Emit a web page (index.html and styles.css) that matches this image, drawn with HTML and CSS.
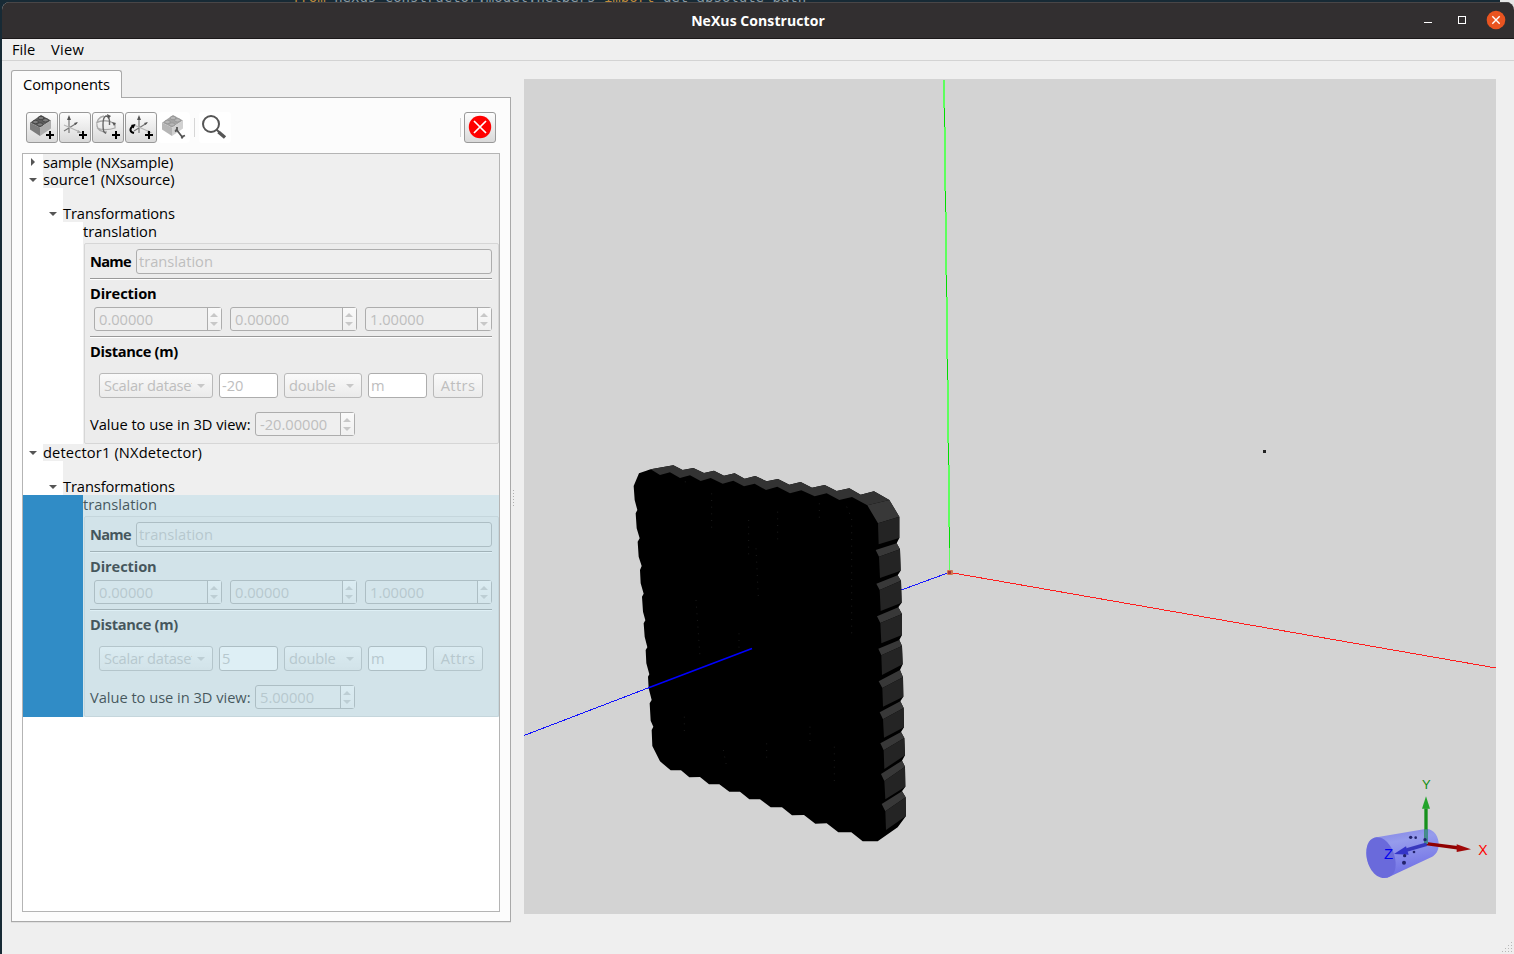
FILE: index.html
```html
<!DOCTYPE html>
<html lang="en">
<head>
<meta charset="utf-8">
<title>NeXus Constructor</title>
<link rel="stylesheet" href="styles.css">
</head>
<body>
<div class="desktop">
<div class="code"><span class="kw">from</span> nexus_constructor.model.helpers <span class="kw">import</span> get_absolute_path</div>
<div class="window">
<header class="titlebar"><span class="title">NeXus Constructor</span>
<svg class="winbtns" width="90" height="36" viewBox="1424 2 90 36"><path d="M1424 21.500h8" stroke="#fff"/><rect x="1458.5" y="15.5" width="7" height="7" fill="none" stroke="#fff"/><circle cx="1496" cy="19" r="9.3" fill="#e95420"/><path d="M1492.3 15.3l7.4 7.4M1499.7 15.3l-7.4 7.4" stroke="#fff" stroke-width="1.4"/></svg>
</header>
<nav class="menubar"><span class="m-file">File</span><span class="m-view">View</span></nav>
<main class="main">
<section class="left">
<div class="tab"><span>Components</span></div>
<div class="panel">
<div class="toolbar">
<svg width="0" height="0" class="defs"><defs>
<g id="brick"><path d="M3 9.700L14 2l10 5.500-11 7z" fill="#5c5c5c"/><path d="M3 9.700l10 4.800v8.500L3 16.500z" fill="#7c7c7c"/><path d="M13 14.500l11-7v8L13 23z" fill="#adadad"/><g fill="#7d7d7d" stroke="#3c3c3c" stroke-width=".8"><ellipse cx="8.500" cy="9" rx="2.900" ry="1.700"/><ellipse cx="13" cy="11.500" rx="2.900" ry="1.700"/><ellipse cx="14" cy="5" rx="2.900" ry="1.700"/><ellipse cx="18.500" cy="7.300" rx="2.900" ry="1.700"/></g></g>
<g id="plus"><path d="M19 22h8M23 18v8" stroke="#000" stroke-width="2" fill="none"/></g>
<g id="axes" fill="none"><path d="M9 20V5M4 18l13-8" stroke="#777" stroke-width="1.2"/><path d="M9 2l-2 5h4zM18 9l-4 1 1.500 2z" fill="#555"/><path d="M4 12l16 7" stroke="#b5b5b5" stroke-width="1.200"/><path d="M22 20l-4-3-1 3z" fill="#aaa"/></g>
</defs></svg>
<span class="tb"><svg width="30" height="29"><use href="#brick"/><use href="#plus"/></svg></span>
<span class="tb"><svg width="30" height="29"><use href="#axes"/><use href="#plus"/></svg></span>
<span class="tb"><svg width="30" height="29" fill="none"><path d="M11 3c-5 1-8 5-7 10s5 6 10 6M3 10c5-3 13-3 17 0M4 15c5 2 12 2 18 0v-4" stroke="#aaa" stroke-width="1.300"/><path d="M13 20c-4 0-4-16 0-17 3 0 4 4 3.500 9M10 18l3 2.500" stroke="#666" stroke-width="1.400"/><path d="M14 1l4 2-3 3zM19 9l4 1-2 3z" fill="#555"/><use href="#plus"/></svg></span>
<span class="tb"><svg width="30" height="29"><g transform="translate(4 0)"><use href="#axes"/></g><path d="M8 20c-4-1-5-4-1-7" fill="none" stroke="#000" stroke-width="2"/><path d="M5 12l4.500-1-2 4.500z"/><use href="#plus"/></svg></span>
<span class="tb plain"><svg width="30" height="29"><g opacity=".55"><use href="#brick"/></g><path d="M17 16l7 9M16 18.500l2-1.500 0-3M22.500 25.500l1-2 2.500-1" fill="none" stroke="#555" stroke-width="1.800"/></svg></span>
<i class="sep"></i>
<span class="tb search"><svg width="32" height="31"><circle cx="12" cy="12" r="8" fill="none" stroke="#555" stroke-width="2"/><path d="M17.500 17.500l3 3" stroke="#555" stroke-width="2"/><path d="M19.500 20l6.500 5.500" stroke="#555" stroke-width="3.500"/></svg></span>
<i class="sep far"></i>
<span class="tb"><svg width="30" height="29"><circle cx="15" cy="14" r="11.200" fill="#f00"/><path d="M9 8l12 12M21 8L9 20" stroke="#fff" stroke-width="1.700"/></svg></span>
</div>
<div class="tree">
<div class="row l1"><i class="arrow shut"></i><span>sample (NXsample)</span></div>
<div class="row l1"><i class="arrow"></i><span>source1 (NXsource)</span></div>
<div class="row l2"></div>
<div class="row l2"><i class="arrow"></i><span class="t-trans">Transformations</span></div>
<div class="item"><div class="item-body">
<div class="item-title">translation</div>
<div class="frame">
<div class="name-row"><b class="t-name">Name</b><div class="field name"><span>translation</span></div></div>
<hr>
<b class="heading t-dir">Direction</b>
<div class="vec"><div class="spin"><span>0.00000</span><i></i></div><div class="spin"><span>0.00000</span><i></i></div><div class="spin"><span>1.00000</span><i></i></div></div>
<hr class="second">
<b class="heading t-dist">Distance (m)</b>
<div class="fields"><div class="combo wide"><span>Scalar dataset</span><i></i></div><div class="field white">-20</div><div class="combo"><span>double</span><i></i></div><div class="field white">m</div><div class="attrs">Attrs</div></div>
<div class="value"><span class="t-val">Value to use in 3D view:</span><div class="spin"><span>-20.00000</span><i></i></div></div>
</div></div></div>
<div class="row l1"><i class="arrow"></i><span class="t-det">detector1 (NXdetector)</span></div>
<div class="row l2"></div>
<div class="row l2"><i class="arrow"></i><span class="t-trans">Transformations</span></div>
<div class="item selected"><div class="item-body">
<div class="item-title">translation</div>
<div class="frame">
<div class="name-row"><b class="t-name">Name</b><div class="field name"><span>translation</span></div></div>
<hr>
<b class="heading t-dir">Direction</b>
<div class="vec"><div class="spin"><span>0.00000</span><i></i></div><div class="spin"><span>0.00000</span><i></i></div><div class="spin"><span>1.00000</span><i></i></div></div>
<hr class="second">
<b class="heading t-dist">Distance (m)</b>
<div class="fields"><div class="combo wide"><span>Scalar dataset</span><i></i></div><div class="field white">5</div><div class="combo"><span>double</span><i></i></div><div class="field white">m</div><div class="attrs">Attrs</div></div>
<div class="value"><span class="t-val">Value to use in 3D view:</span><div class="spin"><span>5.00000</span><i></i></div></div>
</div></div></div>
</div>
</div>
</section>
<div class="splitter"><i></i></div>
<svg class="scene" width="972" height="835" viewBox="524 79 972 835">
<defs>
<linearGradient id="cyl" x1="0" y1="0" x2=".3" y2="1"><stop offset="0" stop-color="#7f7fe4"/><stop offset=".35" stop-color="#969cec"/><stop offset="1" stop-color="#7070e6"/></linearGradient>
</defs>
<g shape-rendering="crispEdges">
<path fill="#5dff5d" d="M943 80h1v28h-1zM944 80h1v111h-1zM945 127h1v148h-1zM946 212h1v147h-1zM947 297h1v146h-1zM948 380h1v147h-1zM949 465h1v107h-1z"/>
<path fill="#00dc00" d="M944 108h1v19h-1zM945 191h1v21h-1zM946 275h1v22h-1zM947 359h1v21h-1zM948 443h1v22h-1zM949 527h1v21h-1z"/>
<path d="M950 572.500L1496 668" stroke="#ff1e1e" fill="none"/>
<path d="M949 572.500L900 590.500" stroke="#1a1aff" fill="none"/>
</g>
<rect x="947" y="570" width="6" height="5" rx="1" fill="#d0784e"/><rect x="948" y="571" width="3" height="3" fill="#a33"/>
<rect x="1263" y="450" width="3" height="3" fill="#222"/>
<g transform="translate(620 450) scale(.33333)">
<path d="M57 70L92 58 160 46 188 60 220 54 252 69 282 62 312 77 344 70 374 86 406 78 440 94 474 87 508 104 542 96 576 113 614 105 650 123 688 115 722 134 762 124 808 150 838 200 838 264 830 280 840 298 842 362 833 376 843 392 845 458 835 472 846 492 846 555 838 570 846 588 848 643 840 660 849 682 850 740 841 754 851 774 852 832 843 846 853 864 855 916 846 932 855 950 856 1010 846 1024 857 1042 858 1098 833 1132 773 1174 728 1174 694 1147 655 1147 620 1120 586 1121 552 1095 516 1096 486 1072 452 1072 420 1048 388 1048 360 1025 328 1025 298 1003 267 1003 240 981 208 982 183 961 152 961 120 934 97 888 95 840 100 830 92 812 89 760 95 750 86 715 84 680 88 673 79 640 77 600 82 592 74 560 71 520 76 511 69 485 66 440 71 431 62 400 60 360 65 348 56 320 53 275 59 265 50 235 47 190 52 180 44 150 41 108z"/>
<path fill="#333" d="M92 58L160 46 188 60 220 54 252 69 282 62 312 77 344 70 374 86 406 78 440 94 474 87 508 104 542 96 576 113 614 105 650 123 688 115 722 134 762 124 808 150 742 166 696 141 658 150 620 130 584 139 544 121 510 130 472 110 438 120 404 101 372 109 340 92 308 101 272 84 242 93 210 76 180 84 150 67 120 75z"/>
<path fill="#383838" d="M742 166L808 150 838 200 774 220zM767 300L830 280 840 298 777 320zM769 401L833 376 843 392 779 420zM771 499L835 472 846 492 781 519zM775 596L838 570 846 588 784 616zM776 694L840 660 849 682 787 714zM779 787L841 754 851 774 789 808zM781 880L843 846 853 864 791 901zM783 972L846 932 855 950 793 993zM785 1062L846 1024 857 1042 796 1084z"/>
<path fill="#242424" d="M774 220L838 200 838 264 776 283zM777 320L840 298 842 362 780 384zM779 420L843 392 845 458 782 483zM781 519L846 492 846 555 784 580zM784 616L846 588 848 643 786 675zM787 714L849 682 850 740 789 770zM789 808L851 774 852 832 792 863zM791 901L853 864 855 916 793 957zM793 993L855 950 856 1010 796 1048zM796 1084L857 1042 858 1098 798 1140z"/>
<path stroke="#222" stroke-width="2.500" stroke-dasharray="3 17" fill="none" d="M196 94V108M275 130V250M386 210V330M473 185V270M598 160V220M680 170L695 205V560M228 450L240 620M357 550L357 600M408 295L415 440M193 800V850M310 900L320 950M440 880V930M570 830V890M643 890V1000"/>
</g>
<path d="M752 648.500L648 688" stroke="#00f" stroke-width="1.500"/><path d="M648 688L524 735.500" stroke="#11f" stroke-width="1" shape-rendering="crispEdges"/>
<g transform="translate(1350 760) scale(.33333)">
<path d="M80 232L226 207C252 205 267 230 266 255 266 272 257 285 245 291L112 353C80 357 50 320 49 280 49 253 60 235 80 232z" fill="url(#cyl)"/>
<path d="M80 232C110 231 137 272 137 314 137 338 126 351 103 354 72 354 49 316 49 278 49 251 60 234 80 232z" fill="#6a6adb"/>
<path d="M228 251L328 264" stroke="#900000" stroke-width="10"/><path d="M320 253L363 268 320 276z" fill="#a00808"/>
<path d="M228 252V145" stroke="#16911c" stroke-width="10"/><path d="M216 146L228 109 240 146z" fill="#22a42a"/>
<path d="M223 208h11v44h-11z" fill="#458b91"/>
<path d="M230 253L170 270" stroke="#3838bd" stroke-width="11"/><path d="M132 282L168 259 176 284z" fill="#3434c8"/>
<g fill="#23236c"><circle cx="182" cy="232" r="5"/><circle cx="197" cy="233" r="4"/><circle cx="225" cy="239" r="5"/><circle cx="192" cy="276" r="4"/><circle cx="164" cy="287" r="5"/><circle cx="162" cy="308" r="6"/></g>
</g>
<g class="axis"><text x="1422" y="788.500" font-size="13" fill="#149014">Y</text><text x="1478.300" y="855" font-size="14" fill="#f00">X</text><text x="1384" y="859" font-size="15" fill="#0000f0">Z</text></g>
</svg>
</main>
<svg class="grip" width="12" height="12"><path d="M10.500 0v12M7.500 3v9M4.500 6v6M1.500 9v3" stroke="#b8b8b8" stroke-dasharray="1 2"/></svg>
</div>
</div>
</body>
</html>
```
FILE: styles.css
```css
* { box-sizing: border-box; }
body { margin: 0; overflow: hidden; font: 14.67px/17px "Open Sans", "Noto Sans", sans-serif; color: #000; }
.desktop { position: relative; width: 1514px; height: 954px; padding: 2px 0 0 2px; overflow: hidden; background: linear-gradient(90deg, #172a35 1500px, #e6e6e6 1500px); }
.code { position: absolute; left: 292px; top: -12px; font: 14px/18px "DejaVu Sans Mono", monospace; color: #8b9aa3; white-space: pre; }
.code .kw { color: #c08a3a; }
.window { position: relative; height: 952px; background: #efefef; border-radius: 8px 8px 0 0; overflow: hidden; }
.titlebar { height: 37px; display: flex; justify-content: flex-end; background: #322f30; border-top: 1px solid #494647; border-bottom: 1px solid #1b1819; }
.title { flex: 1; padding-left: 90px; text-align: center; color: #fff; font-weight: 700; font-size: 14px; letter-spacing: .07px; line-height: 35px; }
.menubar { height: 22px; display: flex; padding-left: 10px; line-height: 21px; border-bottom: 1px solid #d3d3d3; }
.m-file { width: 39px; }
.m-view { letter-spacing: .3px; }
.main { display: flex; padding: 9px 0 0 9px; }
.left { width: 500px; }
.tab { position: relative; width: 111px; height: 28px; margin-bottom: -1px; padding-left: 11px; line-height: 27px; letter-spacing: -.1px; border: 1px solid #a9a9a9; border-bottom: 0; border-radius: 3px 3px 0 0; background: #fcfcfc; }
.panel { height: 825px; padding: 14px 10px 0; border: 1px solid #a9a9a9; background: #fcfcfc; box-shadow: 0 1px #e0e0e0; }
.toolbar { display: flex; gap: 1px; height: 31px; padding: 0 4px; }
.defs { position: absolute; }
.tb { width: 32px; height: 31px; border: 1px solid #999; border-radius: 3px; background: linear-gradient(#fdfdfd, #d9d9d9); }
.tb svg { display: block; }
.plain { border-color: #fff; background: #fff; }
.search { border: 0; background: #fff; }
.sep { width: 1px; height: 19px; margin: 6px 3px 0 3px; background: #d6d6d6; }
.far { margin: 6px 2px 0 auto; }
.tree { height: 759px; width: 478px; margin-top: 10px; border: 1px solid #b4b4b4; background: #fff; }
.row { position: relative; height: 17px; line-height: 16px; background: #efefef; white-space: nowrap; letter-spacing: -.05px; }
.row .t-trans { letter-spacing: -.1px; }
.row .t-det { letter-spacing: .15px; }
.l1 { margin-left: 20px; }
.l2 { margin-left: 40px; }
.arrow { position: absolute; left: -14px; top: 7px; border: 4px solid transparent; border-top-color: #555; border-bottom: 0; }
.arrow.shut { left: -12px; top: 4px; border: 4px solid transparent; border-left-color: #555; border-right: 0; }
.item { height: 222px; padding-left: 60px; }
.item-body { position: relative; height: 222px; background: #efefef; }
.selected { background: #308cc6; }
.selected .item-body::after { content: ""; position: absolute; inset: 0; background: rgba(173, 216, 230, .4); }
.item-title { height: 21px; line-height: 18px; }
.frame { height: 201px; margin-left: 1px; padding: 5px 6px 5px 5px; border: 1px solid #d6d6d6; border-radius: 2px; background: #ececec; }
.name-row { display: flex; justify-content: space-between; height: 25px; line-height: 25px; }
.t-name { letter-spacing: -.75px; }
.t-dir { letter-spacing: -.12px; }
.t-dist { letter-spacing: -.32px; }
.t-val { letter-spacing: -.03px; }
.field { height: 25px; padding-left: 2px; line-height: 22px; color: #bebebe; border: 1px solid #adadad; border-radius: 3px; background: #efefef; }
.name { width: 356px; }
.white { width: 59px; background: #fff; }
hr { height: 2px; margin: 4px 0 0; border: 0; background: linear-gradient(#999 1px, #fff 1px); }
.heading { display: block; height: 27px; line-height: 26px; }
.vec { display: grid; grid-template-columns: 128px 127px 127px; gap: 8px; padding-left: 4px; }
.spin { display: flex; height: 24px; padding-left: 4px; line-height: 22px; color: #bebebe; border: 1px solid #adadad; border-radius: 3px; background: #efefef; }
.spin span { flex: 1; }
.spin i { position: relative; width: 14px; border-left: 1px solid #adadad; background: linear-gradient(#fafafa, #f0f0f0); }
.spin i::before, .spin i::after { content: ""; position: absolute; left: 2px; border: 4px solid transparent; }
.spin i::before { top: 5px; border-bottom: 4px solid #c8c8c8; border-top: 0; }
.spin i::after { bottom: 4px; border-top: 4px solid #c8c8c8; border-bottom: 0; }
.second { margin-top: 5px; }
.fields { display: flex; gap: 6px; margin: 8px 0 0 9px; }
.combo { display: flex; align-items: center; width: 78px; height: 25px; padding: 0 7px 0 4px; color: #bebebe; letter-spacing: -.2px; border: 1px solid #b9b9b9; border-radius: 3px; background: linear-gradient(#fafafa, #ebebeb); }
.combo.wide { width: 114px; letter-spacing: -.25px; }
.combo span { flex: 1; margin-right: 5px; overflow: hidden; white-space: nowrap; }
.combo i { border: 4px solid transparent; border-top: 4px solid #c8c8c8; border-bottom: 0; }
.attrs { width: 50px; height: 25px; line-height: 22px; text-align: center; color: #bebebe; letter-spacing: .4px; border: 1px solid #b9b9b9; border-radius: 3px; background: linear-gradient(#fafafa, #ebebeb); }
.value { display: flex; justify-content: space-between; width: 265px; margin-top: 14px; line-height: 25px; white-space: nowrap; }
.value .spin { width: 100px; line-height: 22px; }
.splitter { width: 13px; padding: 420px 0 0 2px; }
.splitter i { display: block; width: 1px; height: 17px; background: repeating-linear-gradient(#b0b0b0 0 1px, transparent 1px 3px); }
.scene { display: block; margin-top: 9px; background: #d3d3d3; }
.axis { font-family: "Liberation Sans", sans-serif; }
.grip { position: absolute; right: 1px; bottom: 0; }
```
